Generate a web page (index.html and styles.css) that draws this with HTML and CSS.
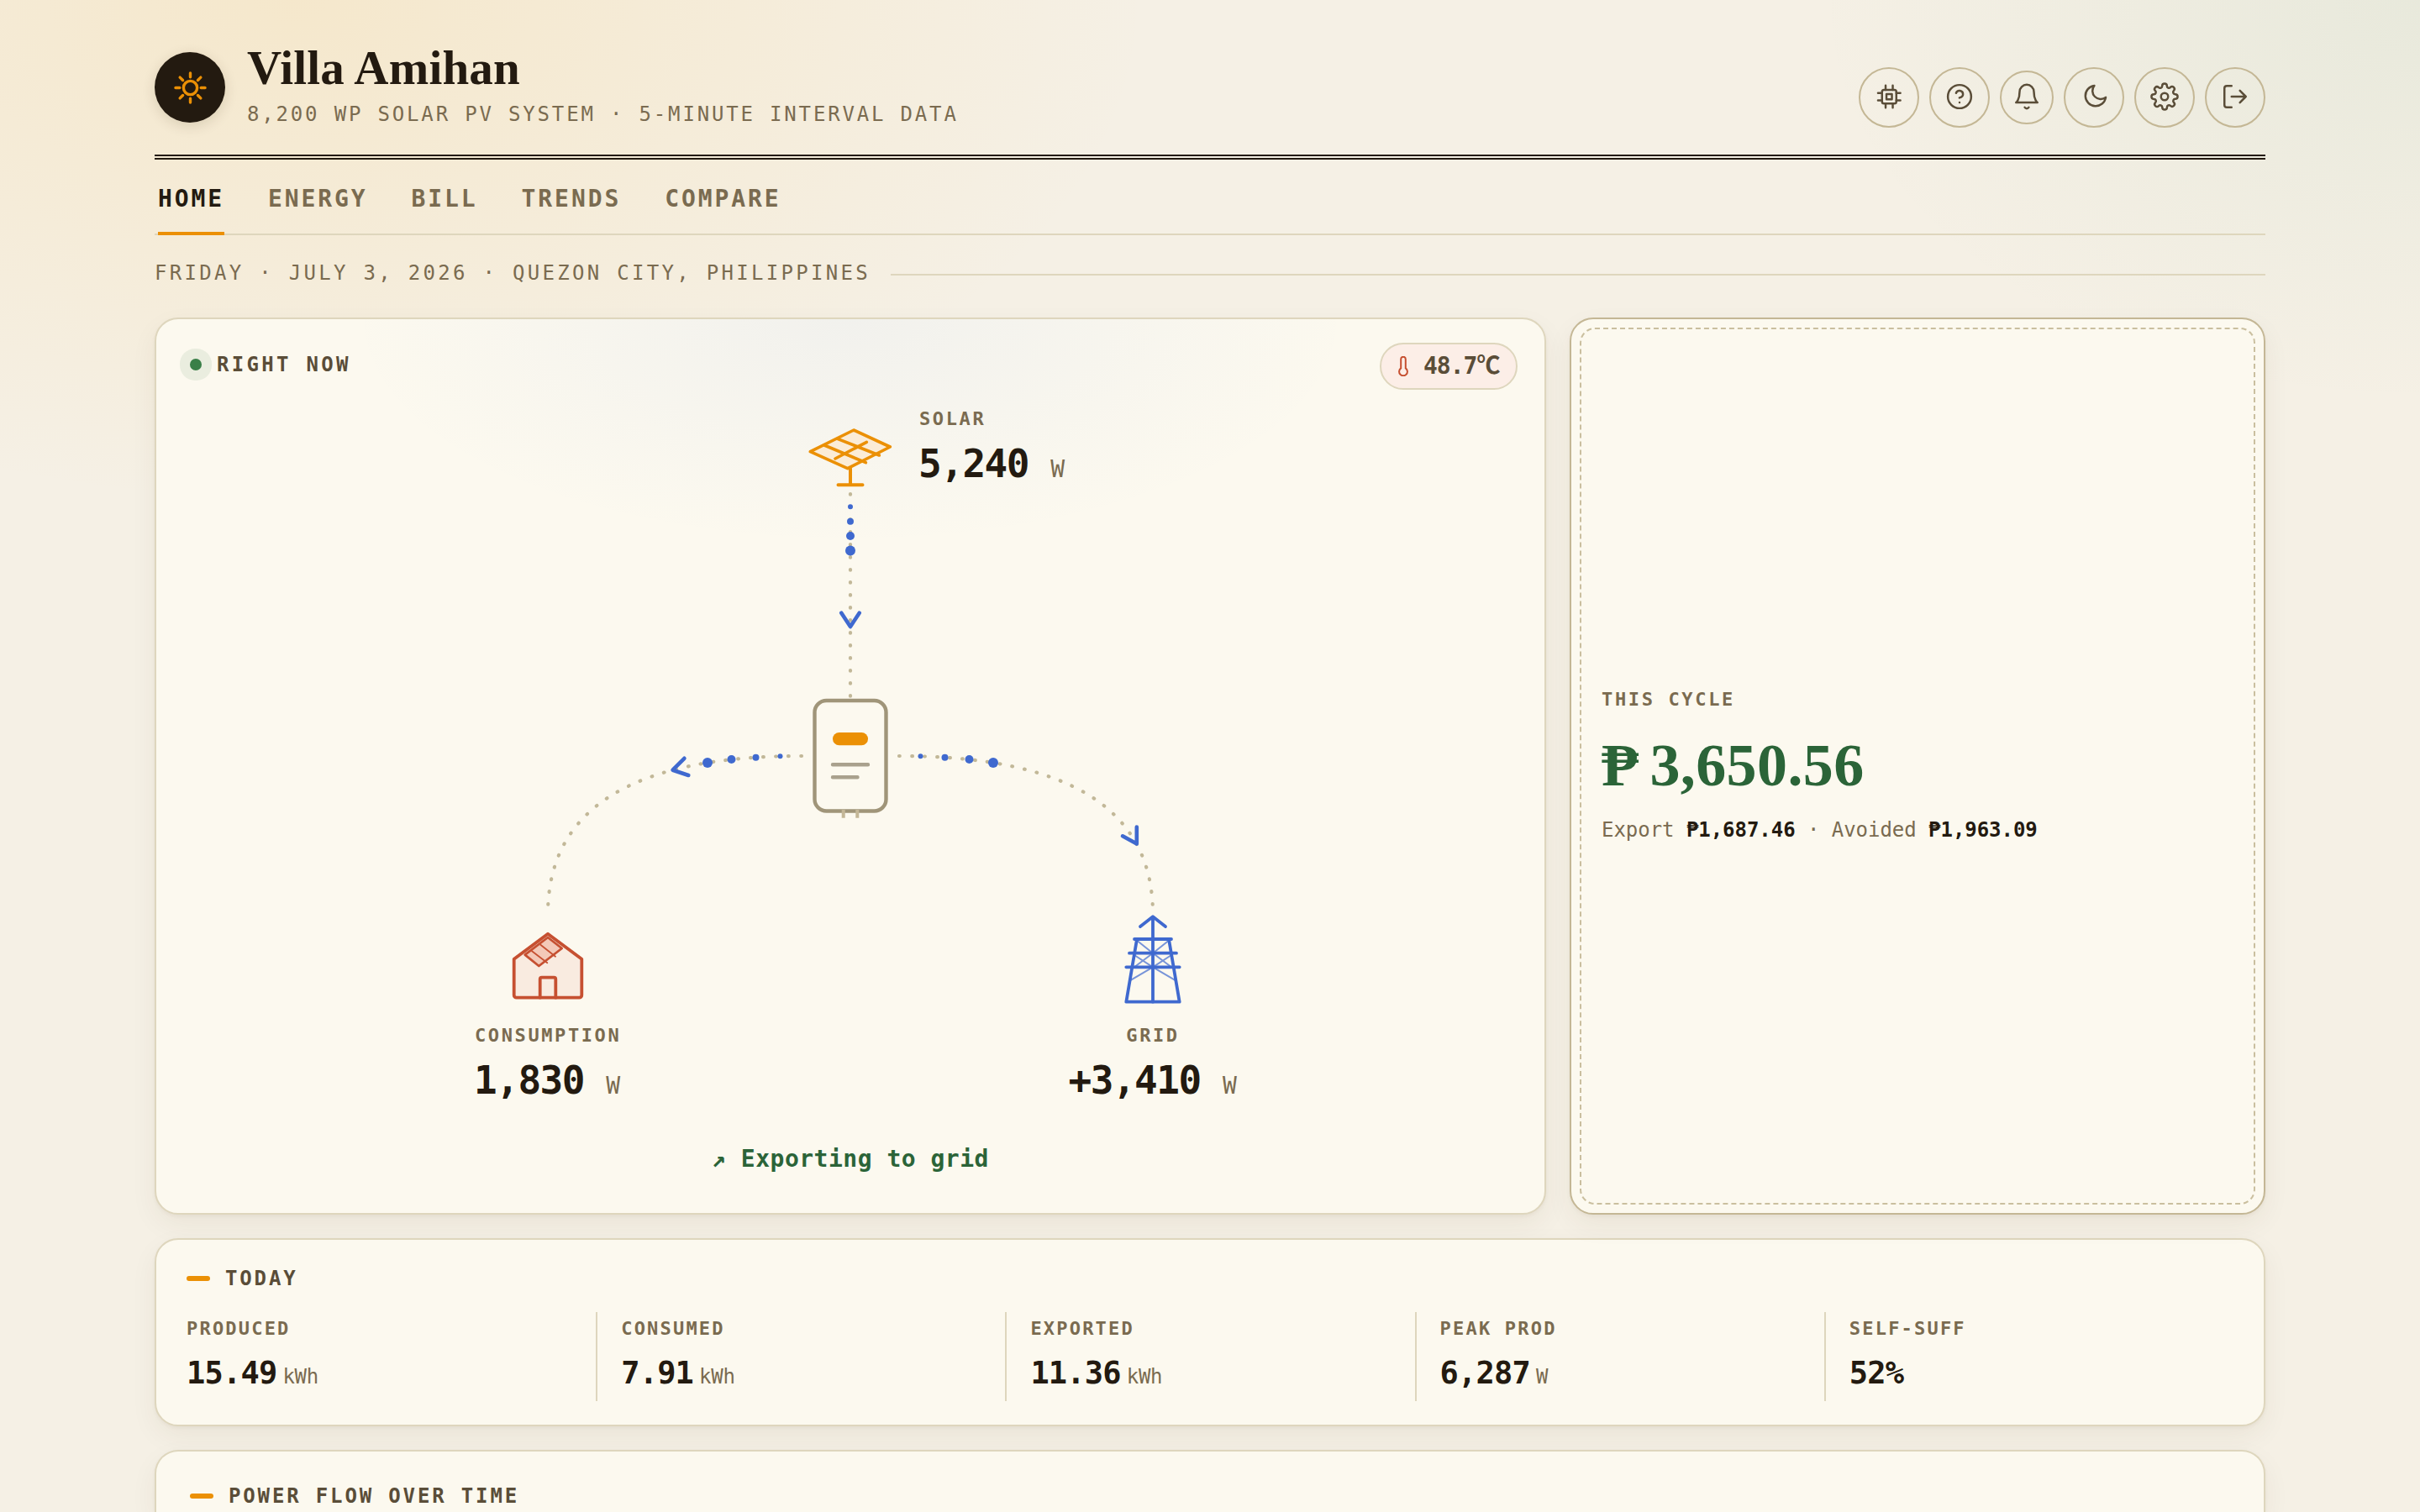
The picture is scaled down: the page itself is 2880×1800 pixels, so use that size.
FILE: index.html
```html
<!DOCTYPE html>
<html lang="en">
<head>
    <meta charset="UTF-8">
    <meta name="viewport" content="width=device-width, initial-scale=1.0">
    <title>Villa Amihan</title>
    <link rel="stylesheet" href="styles.css">
</head>
<body>
    <div class="page">
        <!-- Header -->
        <header class="header">
            <div class="brand">
                <div class="logo">
                    <svg viewBox="0 0 24 24">
                        <circle cx="12" cy="12" r="5"/>
                        <path d="M12 1.2v3M12 19.8v3M1.2 12h3M19.8 12h3M4.4 4.4l2.1 2.1M17.5 17.5l2.1 2.1M4.4 19.6l2.1-2.1M17.5 6.5l2.1-2.1"/>
                    </svg>
                </div>
                <div>
                    <h1>Villa Amihan</h1>
                    <p class="subtitle">8,200 WP SOLAR PV SYSTEM · 5-MINUTE INTERVAL DATA</p>
                </div>
            </div>
            <div class="actions">
                <button class="icon-btn" aria-label="Devices">
                    <svg viewBox="0 0 24 24">
                        <rect x="6.2" y="6.4" width="12" height="11.4" rx="1.6"/>
                        <rect x="9.9" y="9.9" width="4.6" height="4.4"/>
                        <path d="M9.2 2.6v3.8M15.2 2.6v3.8M9.2 17.8v3.6M15.2 17.8v3.6M2.8 9h3.4M2.8 15.2h3.4M18.2 9h3.4M18.2 15.2h3.4"/>
                    </svg>
                </button>
                <button class="icon-btn" aria-label="Help">
                    <svg viewBox="0 0 24 24">
                        <circle cx="12" cy="12" r="9.8"/>
                        <path d="M9.09 9a3 3 0 0 1 5.83 1c0 2-3 3-3 3M12 17h.01"/>
                    </svg>
                </button>
                <button class="icon-btn small" aria-label="Notifications">
                    <svg viewBox="0 0 24 24">
                        <path d="M18 8A6 6 0 0 0 6 8c0 7-3 9-3 9h18s-3-2-3-9M13.73 21a2 2 0 0 1-3.46 0"/>
                    </svg>
                </button>
                <button class="icon-btn" aria-label="Dark mode">
                    <svg viewBox="0 0 24 24">
                        <path d="M12.3 2.8a6.9 6.9 0 0 0 9.6 9.8A8.6 8.6 0 1 1 12.3 2.8z"/>
                    </svg>
                </button>
                <button class="icon-btn" aria-label="Settings">
                    <svg viewBox="0 0 24 24">
                        <circle cx="12" cy="12" r="3"/>
                        <path d="M19.4 15a1.65 1.65 0 0 0 .33 1.82l.06.06a2 2 0 0 1-2.83 2.83l-.06-.06a1.65 1.65 0 0 0-1.82-.33 1.65 1.65 0 0 0-1 1.51V21a2 2 0 0 1-4 0v-.09A1.65 1.65 0 0 0 9 19.4a1.65 1.65 0 0 0-1.82.33l-.06.06a2 2 0 0 1-2.83-2.83l.06-.06a1.65 1.65 0 0 0 .33-1.82 1.65 1.65 0 0 0-1.51-1H3a2 2 0 0 1 0-4h.09A1.65 1.65 0 0 0 4.6 9a1.65 1.65 0 0 0-.33-1.82l-.06-.06a2 2 0 0 1 2.83-2.83l.06.06a1.65 1.65 0 0 0 1.82.33H9a1.65 1.65 0 0 0 1-1.51V3a2 2 0 0 1 4 0v.09a1.65 1.65 0 0 0 1 1.51 1.65 1.65 0 0 0 1.82-.33l.06-.06a2 2 0 0 1 2.83 2.83l-.06.06a1.65 1.65 0 0 0-.33 1.82V9a1.65 1.65 0 0 0 1.51 1H21a2 2 0 0 1 0 4h-.09a1.65 1.65 0 0 0-1.51 1z"/>
                    </svg>
                </button>
                <button class="icon-btn" aria-label="Log out">
                    <svg viewBox="0 0 24 24">
                        <path d="M9 21H5a2 2 0 0 1-2-2V5a2 2 0 0 1 2-2h4M16 17l5-5-5-5M21 12H9"/>
                    </svg>
                </button>
            </div>
        </header>

        <nav class="tabs">
            <a class="tab active">HOME</a>
            <a class="tab">ENERGY</a>
            <a class="tab">BILL</a>
            <a class="tab">TRENDS</a>
            <a class="tab">COMPARE</a>
        </nav>

        <div class="dateline">FRIDAY · JULY 3, 2026 · QUEZON CITY, PHILIPPINES</div>

        <main>
            <div class="hero">
                <!-- Live power flow -->
                <section class="card flow-card">
                    <div class="flow-head">
                        <div class="live"><span class="live-dot"></span>RIGHT NOW</div>
                        <div class="temp">
                            <svg viewBox="0 0 12 24">
                                <path d="M3.2 3.6a2.8 2.8 0 0 1 5.6 0v10.8a4.9 4.9 0 1 1-5.6 0z"/>
                            </svg>
                            <span>48.7<span class="deg">℃</span></span>
                        </div>
                    </div>

                    <svg class="flow" viewBox="-500 0 1000 870">
                        <!-- wires -->
                        <g class="wire">
                            <path d="M0 118V360"/>
                            <path d="M58 430Q360 430 360 618"/>
                            <path d="M-58 430Q-360 430 -360 618"/>
                        </g>

                        <!-- moving particles -->
                        <g class="particles">
                            <circle cx="0" cy="133.3" r="3"/>
                            <circle cx="0" cy="150.7" r="4"/>
                            <circle cx="0" cy="168" r="5"/>
                            <circle cx="0" cy="185.6" r="6"/>
                            <circle cx="83.5" cy="430.2" r="3"/>
                            <circle cx="112.5" cy="431.7" r="4"/>
                            <circle cx="141.5" cy="434" r="5"/>
                            <circle cx="170" cy="438" r="6"/>
                            <circle cx="-83.5" cy="430.2" r="3"/>
                            <circle cx="-112.5" cy="431.7" r="4"/>
                            <circle cx="-141.5" cy="434" r="5"/>
                            <circle cx="-170" cy="438" r="6"/>
                        </g>
                        <g class="arrows">
                            <path d="M-10.7 259.7L0 276L10.7 259.7"/>
                            <path d="M-197.6 432.8L-211.4 446.7L-192.7 453"/>
                            <path d="M340.8 514.5V534.6L324 525.3"/>
                        </g>

                        <!-- solar panel -->
                        <g class="solar">
                            <path class="solar-fill" d="M4 42L47.3 62L-3.3 87.7L-47.7 67.7Z"/>
                            <path d="M-31 60L18.3 80.7M-15.3 52.3L34.3 72M-18 76L19.3 56.3"/>
                            <path class="post" d="M0 87.7V107.3M-14.5 107.3H14.5"/>
                        </g>

                        <!-- inverter -->
                        <g class="inverter">
                            <rect class="box" x="-42.5" y="364" width="85" height="131.5" rx="14"/>
                            <rect class="led" x="-21" y="402" width="42" height="15.3" rx="7.6"/>
                            <path class="lines" d="M-21 440.3H21M-21 455.3H8.5"/>
                            <path class="prongs" d="M-8.3 494V503.7M8.3 494V503.7"/>
                        </g>

                        <!-- house -->
                        <g class="house">
                            <path class="wall" d="M-360 641.7L-319.7 671.7V714.7A3 3 0 0 1 -322.7 717.7H-397.3A3 3 0 0 1 -400.3 714.7V671.7Z"/>
                            <path class="door" d="M-369.3 717.7V695.7A2 2 0 0 1 -367.3 693.7H-352.7A2 2 0 0 1 -350.7 695.7V717.7"/>
                            <path class="roof" d="M-360 646L-343.3 659L-370.7 680L-387.3 666.7Z"/>
                            <path class="cells" d="M-368.7 654.7L-351 668.7M-379 662.3L-360.7 676.3"/>
                        </g>

                        <!-- grid pylon -->
                        <g class="pylon">
                            <path d="M345 633L360 621.3L375 633M360 621.3V722.7M338 648H382M332 664.7H388M328.3 681.3H391.7"/>
                            <path d="M341 648L328.3 722.7H391.7L379 648"/>
                            <path class="brace" d="M341.5 650L360 664.7L378.5 650M338 667L360 681.3L382 667M338 681.3L360 664.7L382 681.3M334 696.7L360 681.3L386 696.7"/>
                        </g>

                        <text class="node-label" x="82" y="35.7">SOLAR</text>
                        <text class="node-value" x="81" y="97.7">5,240 <tspan class="node-unit">W</tspan></text>
                        <text class="node-label" x="-447" y="770">CONSUMPTION</text>
                        <text class="node-value" x="-448" y="831.7">1,830 <tspan class="node-unit">W</tspan></text>
                        <text class="node-label" x="328.3" y="770">GRID</text>
                        <text class="node-value" x="259.5" y="831.7">+3,410 <tspan class="node-unit">W</tspan></text>
                    </svg>

                    <div class="status">↗ Exporting to grid</div>
                </section>

                <!-- Billing cycle -->
                <section class="card cycle-card">
                    <div class="cycle-label">THIS CYCLE</div>
                    <div class="cycle-value"><span class="peso">₱</span>3,650.56</div>
                    <div class="cycle-detail">Export <b>₱1,687.46</b> · Avoided <b>₱1,963.09</b></div>
                </section>
            </div>

            <section class="card today-card">
                <h2>TODAY</h2>
                <div class="stats">
                    <div class="stat">
                        <div class="stat-label">PRODUCED</div>
                        <div class="stat-value">15.49<small>kWh</small></div>
                    </div>
                    <div class="stat">
                        <div class="stat-label">CONSUMED</div>
                        <div class="stat-value">7.91<small>kWh</small></div>
                    </div>
                    <div class="stat">
                        <div class="stat-label">EXPORTED</div>
                        <div class="stat-value">11.36<small>kWh</small></div>
                    </div>
                    <div class="stat">
                        <div class="stat-label">PEAK PROD</div>
                        <div class="stat-value">6,287<small>W</small></div>
                    </div>
                    <div class="stat">
                        <div class="stat-label">SELF-SUFF</div>
                        <div class="stat-value">52%</div>
                    </div>
                </div>
            </section>

            <section class="card chart-card">
                <h2>POWER FLOW OVER TIME</h2>
            </section>
        </main>
    </div>
</body>
</html>
```
FILE: styles.css
```css
:root {
    --bg: #f5f0e5;
    --card: #fcf9ef;
    --ink: #231a10;
    --ink-2: #5a4d38;
    --muted: #7a6b50;
    --line: #ded6bd;
    --line-strong: #c4b795;
    --sun: #eb9005;
    --green: #2b6438;
    --blue: #3f69cf;
    --red: #c65031;
    --mono: "DejaVu Sans Mono", "Noto Sans CJK SC", monospace;
    --serif: "Liberation Serif", serif;
}

* {
    box-sizing: border-box;
}

body {
    margin: 0;
    height: 1800px;
    overflow: hidden;
    color: var(--ink);
    font-family: var(--mono);
    background:
        radial-gradient(ellipse 1700px 1000px at 12% 0%, rgba(245, 190, 80, 0.17), transparent 60%),
        radial-gradient(ellipse 1200px 800px at 100% 0%, rgba(80, 150, 110, 0.08), transparent 60%),
        var(--bg);
}

h1, h2, p {
    margin: 0;
}

.page {
    width: 2512px;
    height: 1800px;
    margin: 0 auto;
    padding-top: 51px;
}

/* Header */
.header {
    display: flex;
    justify-content: space-between;
    align-items: flex-end;
    padding-bottom: 32px;
    border-bottom: 6px double var(--ink);
}

.brand {
    display: flex;
    align-items: center;
    gap: 26px;
}

.logo {
    display: flex;
    align-items: center;
    justify-content: center;
    width: 84px;
    height: 84px;
    margin-top: 5px;
    border-radius: 50%;
    background: var(--ink);
    box-shadow: 0 4px 16px rgba(60, 40, 10, 0.14);
}

.logo svg {
    width: 39px;
    height: 39px;
    fill: none;
    stroke: var(--sun);
    stroke-width: 2.1;
    stroke-linecap: round;
}

h1 {
    font: bold 57px/60px var(--serif);
    letter-spacing: 0.2px;
}

.subtitle {
    margin-top: 9px;
    font-size: 24px;
    line-height: 32px;
    letter-spacing: 2.83px;
    color: var(--muted);
}

.actions {
    display: flex;
    align-items: center;
    gap: 12px;
}

.icon-btn {
    display: flex;
    align-items: center;
    justify-content: center;
    width: 72px;
    height: 72px;
    padding: 0 0 2px;
    border: 2px solid var(--line-strong);
    border-radius: 50%;
    background: none;
}

.icon-btn.small {
    width: 64px;
    height: 64px;
}

.icon-btn svg {
    width: 34px;
    height: 34px;
    fill: none;
    stroke: var(--ink-2);
    stroke-width: 1.75;
    stroke-linecap: round;
    stroke-linejoin: round;
}

/* Tabs */
.tabs {
    display: flex;
    gap: 52px;
    height: 90px;
    padding-left: 4px;
    border-bottom: 2px solid var(--line);
}

.tab {
    height: 90px;
    padding-top: 31px;
    font-size: 28px;
    font-weight: bold;
    line-height: 32px;
    letter-spacing: 2.9px;
    color: var(--muted);
}

.tab.active {
    color: var(--ink);
    border-bottom: 4px solid var(--sun);
}

.dateline {
    display: flex;
    align-items: center;
    gap: 24px;
    margin: 29px 0 37px;
    font-size: 24px;
    line-height: 32px;
    letter-spacing: 3.3px;
    color: var(--muted);
}

.dateline::after {
    content: "";
    flex: 1;
    height: 2px;
    margin-top: 4px;
    background: var(--line);
}

/* Cards */
main {
    display: flex;
    flex-direction: column;
    gap: 28px;
}

.hero {
    display: grid;
    grid-template-columns: 2fr 1fr;
    gap: 28px;
    height: 1068px;
}

.card {
    border: 2px solid var(--line);
    border-radius: 28px;
    background: var(--card);
    box-shadow: 0 2px 4px rgba(70, 50, 20, 0.05), 0 12px 32px rgba(70, 50, 20, 0.06);
}

.flow-card {
    display: flex;
    flex-direction: column;
    padding-top: 28px;
    background: radial-gradient(ellipse 600px 270px at 50% 0%, rgba(63, 105, 207, 0.055), transparent), var(--card);
}

.flow-head {
    display: flex;
    align-items: center;
    justify-content: space-between;
    padding: 0 32px 0 40px;
}

.live {
    display: flex;
    align-items: center;
    gap: 18px;
    padding-bottom: 4px;
    font-size: 24px;
    font-weight: bold;
    line-height: 32px;
    letter-spacing: 3.3px;
    color: var(--ink-2);
}

.live-dot {
    width: 14px;
    height: 14px;
    border-radius: 50%;
    background: #3a7f48;
    box-shadow: 0 0 0 12px rgba(58, 127, 72, 0.09);
}

.temp {
    display: flex;
    align-items: center;
    gap: 18px;
    width: 164px;
    height: 56px;
    padding-left: 20px;
    border: 2px solid var(--line);
    border-radius: 28px;
    background: #fceee7;
    font-size: 28px;
    font-weight: bold;
    line-height: 32px;
    letter-spacing: -1px;
    white-space: nowrap;
    color: var(--ink-2);
}

.temp svg {
    width: 12px;
    height: 24px;
    fill: none;
    stroke: var(--red);
    stroke-width: 2;
}

.flow {
    width: 1000px;
    height: 870px;
    margin: 6px auto 0;
    fill: none;
    stroke-linecap: round;
    stroke-linejoin: round;
}

.wire {
    stroke: #c2b898;
    stroke-width: 4.2;
    stroke-dasharray: 0.7 14.3;
}

.particles {
    fill: var(--blue);
}

.arrows {
    stroke: var(--blue);
    stroke-width: 4.6;
}

.solar {
    stroke: var(--sun);
    stroke-width: 3.6;
}

.solar-fill {
    fill: #fbecd6;
}

.post {
    stroke-width: 4;
}

.box {
    fill: var(--card);
    stroke: #a09579;
    stroke-width: 4.4;
}

.led {
    fill: var(--sun);
}

.lines {
    stroke: #a9a18d;
    stroke-width: 4.4;
}

.prongs {
    stroke: #c4b797;
    stroke-width: 4;
    stroke-linecap: butt;
}

.house {
    stroke: var(--red);
    stroke-width: 3.8;
}

.wall {
    fill: #f9ebe0;
}

.roof {
    fill: #f3c9b8;
    stroke-width: 2.8;
}

.cells {
    stroke-width: 1.8;
}

.pylon {
    stroke: var(--blue);
    stroke-width: 3.8;
}

.brace {
    stroke-width: 2;
    opacity: 0.7;
}

.node-label {
    font-size: 22px;
    font-weight: bold;
    letter-spacing: 2.6px;
    fill: var(--muted);
}

.node-value {
    font-size: 46px;
    font-weight: bold;
    letter-spacing: -1.5px;
    fill: var(--ink);
}

.node-unit {
    font-size: 28px;
    font-weight: normal;
    letter-spacing: 0;
    fill: var(--muted);
}

.status {
    margin-top: 22px;
    font-size: 28px;
    font-weight: bold;
    line-height: 36px;
    letter-spacing: 0.5px;
    text-align: center;
    color: var(--green);
}

.cycle-card {
    position: relative;
    display: flex;
    flex-direction: column;
    justify-content: center;
    padding: 0 36px;
    border-color: var(--line-strong);
}

/* stitched inner frame */
.cycle-card::before {
    content: "";
    position: absolute;
    inset: 10px;
    border: 2px dashed #cabf9f;
    border-radius: 18px;
}

.cycle-label {
    margin-top: -2px;
    font-size: 22px;
    font-weight: bold;
    line-height: 28px;
    letter-spacing: 2.65px;
    color: var(--muted);
}

.cycle-value {
    margin: 29px 0 26px;
    font: bold 72px/70px var(--serif);
    letter-spacing: 0.4px;
    color: var(--green);
}

.peso {
    margin-right: 13px;
}

.cycle-detail {
    font-size: 24px;
    line-height: 32px;
    letter-spacing: -0.04px;
    color: var(--muted);
}

.cycle-detail b {
    color: var(--ink);
}

h2 {
    display: flex;
    align-items: center;
    gap: 18px;
    font-size: 24px;
    line-height: 32px;
    letter-spacing: 2.85px;
    color: var(--ink-2);
}

h2::before {
    content: "";
    width: 28px;
    height: 6px;
    border-radius: 3px;
    background: var(--sun);
}

.today-card {
    padding: 30px 36px 28px;
}

.stats {
    display: grid;
    grid-template-columns: repeat(5, 1fr);
    margin-top: 24px;
}

.stat {
    height: 106px;
    padding: 6px 0 0 28px;
    border-left: 2px solid var(--line);
}

.stat:first-child {
    padding-left: 0;
    border-left: none;
}

.stat-label {
    font-size: 22px;
    font-weight: bold;
    line-height: 28px;
    letter-spacing: 2.2px;
    color: var(--muted);
}

.stat-value {
    margin-top: 17px;
    font-size: 37px;
    font-weight: bold;
    line-height: 44px;
    letter-spacing: -0.8px;
}

.stat-value small {
    margin-left: 7px;
    font-size: 24px;
    font-weight: normal;
    letter-spacing: -0.3px;
    color: var(--muted);
}

.chart-card {
    height: 74px;
    padding: 37px 40px 0;
    border-bottom: none;
    border-radius: 28px 28px 0 0;
}
```
